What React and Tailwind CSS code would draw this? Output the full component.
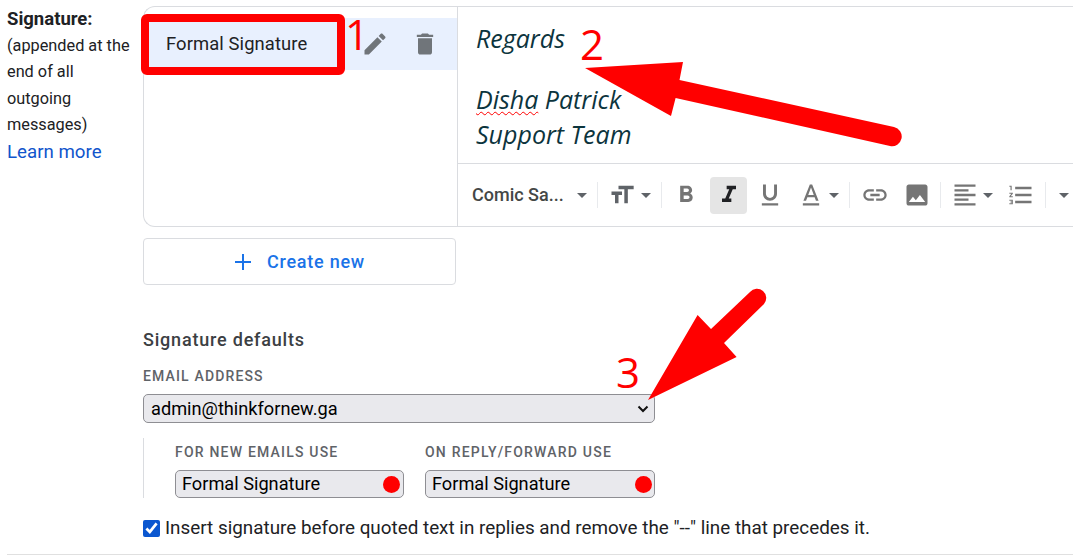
import React from "react";

const P = {
  pencil: "M3 17.25V21h3.75L17.81 9.94l-3.75-3.75L3 17.25zM20.71 7.04c.39-.39.39-1.02 0-1.41l-2.34-2.34c-.39-.39-1.02-.39-1.41 0l-1.83 1.83 3.75 3.75 1.83-1.83z",
  trash: "M6 19c0 1.1.9 2 2 2h8c1.1 0 2-.9 2-2V7H6v12zM19 4h-3.5l-1-1h-5l-1 1H5v2h14V4z",
  size: "M9 4v3h5v12h3V7h5V4H9zm-6 8h3v7h3v-7h3V9H3v3z",
  bold: "M15.6 10.79c.97-.67 1.65-1.77 1.65-2.79 0-2.26-1.75-4-4-4H7v14h7.04c2.09 0 3.71-1.7 3.71-3.79 0-1.52-.86-2.82-2.15-3.42zM10 6.5h3c.83 0 1.5.67 1.5 1.5s-.67 1.5-1.5 1.5h-3v-3zm3.5 9H10v-3h3.5c.83 0 1.5.67 1.5 1.5s-.67 1.5-1.5 1.5z",
  italic: "M10 4v3h2.21l-3.42 8H6v3h8v-3h-2.21l3.42-8H18V4z",
  underline: "M12 17c3.31 0 6-2.69 6-6V3h-2.5v8c0 1.93-1.57 3.5-3.5 3.5S8.5 12.93 8.5 11V3H6v8c0 3.31 2.69 6 6 6zm-7 2v2h14v-2H5z",
  color: "M11 3L5.5 17h2.25l1.12-3h6.25l1.12 3h2.25L13 3h-2zm-1.38 9L12 5.67 14.38 12H9.62zM5 19h14v2H5z",
  link: "M3.9 12c0-1.71 1.39-3.1 3.1-3.1h4V7H7c-2.76 0-5 2.24-5 5s2.24 5 5 5h4v-1.9H7c-1.71 0-3.1-1.39-3.1-3.1zM8 13h8v-2H8v2zm9-6h-4v1.9h4c1.71 0 3.1 1.39 3.1 3.1s-1.39 3.1-3.1 3.1h-4V17h4c2.76 0 5-2.24 5-5s-2.24-5-5-5z",
  image: "M21 19V5c0-1.1-.9-2-2-2H5c-1.1 0-2 .9-2 2v14c0 1.1.9 2 2 2h14c1.1 0 2-.9 2-2zM8.5 13.5l2.5 3.01L14.5 12l4.5 6H5l3.5-4.5z",
  align: "M15 15H3v2h12v-2zm0-8H3v2h12V7zM3 13h18v-2H3v2zm0 8h18v-2H3v2zM3 3v2h18V3H3z",
  list: "M2 17h2v.5H3v1h1v.5H2v1h3v-4H2v1zm1-9h1V4H2v1h1v3zm-1 3h1.8L2 13.1v.9h3v-1H3.2L5 10.9V10H2v1zm5-6v2h14V5H7zm0 14h14v-2H7v2zm0-6h14v-2H7v2z",
};

function Icon({ d, className = "fill-[#5f6368]" }) {
  return (
    <svg viewBox="0 0 24 24" className={`w-[28px] h-[28px] shrink-0 ${className}`}>
      <path d={d} />
    </svg>
  );
}

function Caret({ className = "" }) {
  return (
    <svg viewBox="0 0 10 5" className={`w-[10px] h-[5px] shrink-0 fill-[#5f6368] ${className}`}>
      <path d="M0 0h10L5 5z" />
    </svg>
  );
}

function Sep({ className = "" }) {
  return <div className={`w-px h-[26px] bg-[#e8eaed] shrink-0 ${className}`} />;
}

function SigSelect({ width, dotRight }) {
  return (
    <div className={`${width} h-[28px] rounded-[5px] border border-[#8e8e93] bg-[#e9e9ed] flex items-center justify-between pl-[6px] ${dotRight} text-[18.2px] text-black`}>
      <span>Formal Signature</span>
      <span className="w-[17px] h-[17px] rounded-full bg-[#ff0000]" />
    </div>
  );
}

export default function App() {
  return (
    <div className="relative w-[1073px] h-[555px] overflow-hidden bg-white pl-[7px] font-['Roboto',sans-serif] text-[#202124]">
      <div className="flex h-[555px] border-b border-[#e0e0e0]">
        <div className="w-[136px] shrink-0 pt-[6px] text-[16.3px] leading-[26.6px]">
          <div className="font-bold text-[18.5px]">Signature:</div>
          <div className="w-[125px]">(appended at the end of all outgoing messages)</div>
          <div className="text-[18.7px] text-[#1155cc]">Learn more</div>
        </div>

        <div className="flex-1 min-w-0 flex flex-col pt-[6px]">
          <div className="w-[950px] h-[221px] shrink-0 flex border border-r-0 border-[#dadce0] rounded-l-[12px]">
            <div className="w-[314px] shrink-0 border-r border-[#dadce0] pt-[11px]">
              <div className="h-[52px] bg-[#e8f0fe] flex items-center pl-[22px] pr-[18px]">
                <span className="text-[18.4px] tracking-[0.1px] flex-1">Formal Signature</span>
                <div className="flex items-center gap-[22px]">
                  <Icon d={P.pencil} className="fill-[#70757a]" />
                  <Icon d={P.trash} className="fill-[#70757a]" />
                </div>
              </div>
            </div>
            <div className="flex-1 flex flex-col min-w-0">
              <div className="h-[157px] shrink-0 border-b border-[#dadce0] pl-[18px] pt-[13px] font-['Open_Sans',sans-serif] italic text-[25px] leading-[36px] text-[#0c343d]">
                <div>Regards</div>
                <div className="h-[25px]" />
                <div>
                  <span className="underline decoration-wavy decoration-[#ff0000] decoration-1 underline-offset-2">Disha</span> Patrick
                </div>
                <div className="-mt-px">Support Team</div>
              </div>
              <div className="flex-1 flex items-center pl-[14px]">
                <span className="w-[105px] -mt-[2px] text-[18px] font-medium text-[#444746] whitespace-nowrap">Comic Sa...</span>
                <Caret />
                <Sep className="ml-[10px]" />
                <Icon d={P.size} className="fill-[#5f6368] ml-[10px]" />
                <Caret className="ml-[5px]" />
                <Sep className="ml-[10px]" />
                <Icon d={P.bold} className="fill-[#757575] ml-[10px]" />
                <div className="ml-[10px] w-[37px] h-[37px] rounded-[4px] bg-[#e5e5e5] flex items-center justify-center shrink-0">
                  <Icon d={P.italic} className="fill-[#202124]" />
                </div>
                <Icon d={P.underline} className="fill-[#757575] ml-[9px]" />
                <Icon d={P.color} className="fill-[#757575] ml-[13px]" />
                <Caret className="ml-[4px]" />
                <Sep className="ml-[10px]" />
                <Icon d={P.link} className="fill-[#757575] ml-[11px]" />
                <Icon d={P.image} className="fill-[#757575] ml-[14px]" />
                <Sep className="ml-[9px]" />
                <Icon d={P.align} className="fill-[#757575] ml-[10px]" />
                <Caret className="ml-[4px]" />
                <Icon d={P.list} className="fill-[#757575] ml-[14px]" />
                <Sep className="ml-[10px]" />
                <Caret className="ml-[13px]" />
              </div>
            </div>
          </div>

          <div className="mt-[11px] w-[313px] h-[47px] shrink-0 border border-[#dadce0] rounded-[4px] flex items-center justify-center gap-[15px] text-[#1a73e8] text-[18px] tracking-[0.75px] font-medium">
            <svg viewBox="0 0 18 18" className="w-[18px] h-[18px] fill-[#1a73e8]">
              <path d="M8 1h2v7h7v2h-7v7H8v-7H1V8h7z" />
            </svg>
            <span>Create new</span>
          </div>

          <div className="mt-[43px] text-[18px] font-medium leading-[24px] text-[#3c4043] tracking-[0.8px]">Signature defaults</div>
          <div className="mt-[15px] text-[14px] font-medium leading-[18px] tracking-[1.15px] text-[#5f6368]">EMAIL ADDRESS</div>
          <div className="mt-[9px] w-[512px] h-[29px] rounded-[5px] border border-[#8e8e93] bg-[#e9e9ed] flex items-center justify-between pl-[7px] pr-[4px] text-[18.2px] text-black">
            <span>admin@thinkfornew.ga</span>
            <svg viewBox="0 0 12 8" className="w-[12px] h-[8px] mr-[1px]" fill="none" stroke="#111" strokeWidth="2">
              <path d="M1.5 1.5L6 6l4.5-4.5" />
            </svg>
          </div>

          <div className="mt-[15px] w-[512px] h-[60px] border-l border-[#dadce0] pl-[31px] flex gap-[21px]">
            <div className="flex flex-col w-[229px]">
              <div className="text-[14px] font-medium leading-[18px] tracking-[1.2px] text-[#5f6368] mt-[5px] whitespace-nowrap">FOR NEW EMAILS USE</div>
              <div className="mt-[9px]"><SigSelect width="w-[229px]" dotRight="pr-[3px]" /></div>
            </div>
            <div className="flex flex-col w-[230px]">
              <div className="text-[14px] font-medium leading-[18px] tracking-[1.2px] text-[#5f6368] mt-[5px] whitespace-nowrap">ON REPLY/FORWARD USE</div>
              <div className="mt-[9px]"><SigSelect width="w-[230px]" dotRight="pr-[2px]" /></div>
            </div>
          </div>

          <label className="mt-[19px] flex items-center gap-[5px] text-[18.85px] leading-[22px] whitespace-nowrap">
            <input type="checkbox" defaultChecked readOnly className="w-[17px] h-[17px] m-0 accent-[#0b57d0]" />
            <span>Insert signature before quoted text in replies and remove the "--" line that precedes it.</span>
          </label>
        </div>
      </div>

      <svg viewBox="0 0 1073 555" className="absolute inset-0 w-[1073px] h-[555px] pointer-events-none">
        <rect x="145" y="18" width="196" height="53" rx="2" fill="none" stroke="#ff0000" strokeWidth="8" />
        <path d="M585 68L683 62L679.5 80L894 127A9 9 0 0 1 890 146L675.6 98L671 116Z" fill="#ff0000" />
        <path d="M648 400L697.6 315L711 329L750 292A9 9 0 0 1 764 304L724 343L736.6 357Z" fill="#ff0000" />
      </svg>
      <span className="absolute left-[345px] top-[10px] text-[42px] leading-[48px] text-[#ff0000] font-['Open_Sans',sans-serif]">1</span>
      <span className="absolute left-[580px] top-[20px] text-[42px] leading-[48px] text-[#ff0000] font-['Open_Sans',sans-serif]">2</span>
      <span className="absolute left-[616px] top-[348px] text-[42px] leading-[48px] text-[#ff0000] font-['Open_Sans',sans-serif]">3</span>
    </div>
  );
}
